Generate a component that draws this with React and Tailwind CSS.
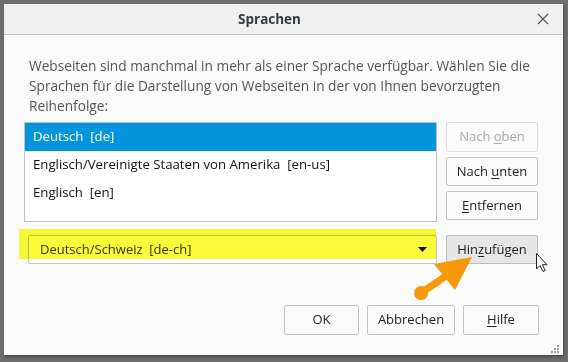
import React from "react";

const U = ({ children }) => <span className="underline underline-offset-2">{children}</span>;

function Btn({ children, className = "", disabled = false, hover = false }) {
  return (
    <div
      className={
        "flex items-center justify-center rounded-[2px] border text-[13px] " +
        (disabled
          ? "border-[#dcdcdc] text-[#a8a8a8] bg-[#fbfbfb] "
          : hover
          ? "border-[#bdbdbd] text-[#222] bg-[#e6e6e6] "
          : "border-[#c4c4c4] text-[#222] bg-[#fbfbfb] ") +
        className
      }
    >
      {children}
    </div>
  );
}

export default function App() {
  return (
    <div
      className="relative w-[568px] h-[362px] bg-[#6e6e6e] pt-[4px] pl-[4px] overflow-hidden"
      style={{ fontFamily: '"Open Sans", "Noto Sans", sans-serif' }}
    >
      <div className="w-[559px] h-[351px] bg-[#fafafa] flex flex-col shadow-[1px_2px_3px_rgba(0,0,0,0.35)]">
        <div className="relative h-[31px] bg-[#f0f0f0] border-b border-[#c2c2c2] flex items-center justify-center pr-[28px]">
          <span className="text-[13.5px] font-bold text-[#333b46]">Sprachen</span>
          <svg className="absolute right-[14px] top-[9px]" width="12" height="12" viewBox="0 0 12 12">
            <path d="M1 1L11 11M11 1L1 11" stroke="#555" strokeWidth="1.1" />
          </svg>
        </div>
        <div className="flex flex-col px-[20px] flex-1">
          <p className="mt-[21px] pl-[5px] pr-[2px] text-[13.7px] leading-[20px] text-[#555]">
            Webseiten sind manchmal in mehr als einer Sprache verfügbar. Wählen Sie die Sprachen für die Darstellung von Webseiten in der von Ihnen bevorzugten Reihenfolge:
          </p>
          <div className="flex mt-[6px] gap-[9px]">
            <div className="w-[413px] h-[100px] border border-[#c0c0c0] bg-white text-[13.2px] text-[#111]">
              <div className="h-[28px] bg-[#0395dc] text-white flex items-center pl-[8px]">Deutsch&nbsp;&nbsp;[de]</div>
              <div className="h-[28px] flex items-center pl-[8px]">Englisch/Vereinigte Staaten von Amerika&nbsp;&nbsp;[en-us]</div>
              <div className="h-[28px] flex items-center pl-[8px]">Englisch&nbsp;&nbsp;[en]</div>
            </div>
            <div className="flex flex-col gap-[5px]">
              <Btn disabled className="w-[92px] h-[30px]">Nach&nbsp;<U>o</U>ben</Btn>
              <Btn className="w-[92px] h-[29px]">Nach&nbsp;<U>u</U>nten</Btn>
              <Btn className="w-[92px] h-[29px]"><U>E</U>ntfernen</Btn>
            </div>
          </div>
          <div className="flex mt-[13px] gap-[9px]">
            <div className="relative ml-[4px] w-[409px] h-[29px] border border-[#c4c4c4] rounded-[2px] bg-white flex items-center pl-[11px] text-[13px] text-[#333]">
              Deutsch/Schweiz&nbsp;&nbsp;[de-ch]
              <svg className="absolute right-[9px] top-[11px]" width="9" height="5" viewBox="0 0 9 5">
                <path d="M0 0H9L4.5 5Z" fill="#111" />
              </svg>
            </div>
            <Btn hover className="w-[92px] h-[29px]">Hin<U>z</U>ufügen</Btn>
          </div>
          <div className="flex justify-end gap-[8px] mt-[41px] pr-[4px]">
            <Btn className="w-[75px] h-[30px]">OK</Btn>
            <Btn className="w-[88px] h-[30px]">Abbrechen</Btn>
            <Btn className="w-[76px] h-[30px]"><U>H</U>ilfe</Btn>
          </div>
        </div>
      </div>

      {/* yellow highlight */}
      <div className="absolute left-[19px] top-[229px] w-[417px] h-[30px] bg-[#fbfb3c] mix-blend-multiply" />

      {/* orange arrow + cursor + grip */}
      <svg className="absolute left-0 top-0 pointer-events-none" width="568" height="362" viewBox="0 0 568 362">
        <line x1="421" y1="293" x2="446" y2="276" stroke="#f7970a" strokeWidth="7" />
        <circle cx="421" cy="293" r="7" fill="#f7970a" />
        <path d="M472 257 L434 264 L455 290 Z" fill="#f7970a" />
        <path d="M536.5 253.5 V269 L540 265.5 L543 271.5 L545.2 270.5 L542.3 264.7 L547 264.7 Z" fill="#fff" stroke="#222" strokeWidth="1" strokeLinejoin="round" />
        <g fill="#a0a0a0">
          <rect x="557" y="345" width="2" height="2" />
          <rect x="554" y="348" width="2" height="2" />
          <rect x="557" y="348" width="2" height="2" />
          <rect x="551" y="351" width="2" height="2" />
          <rect x="554" y="351" width="2" height="2" />
          <rect x="557" y="351" width="2" height="2" />
        </g>
      </svg>
    </div>
  );
}
